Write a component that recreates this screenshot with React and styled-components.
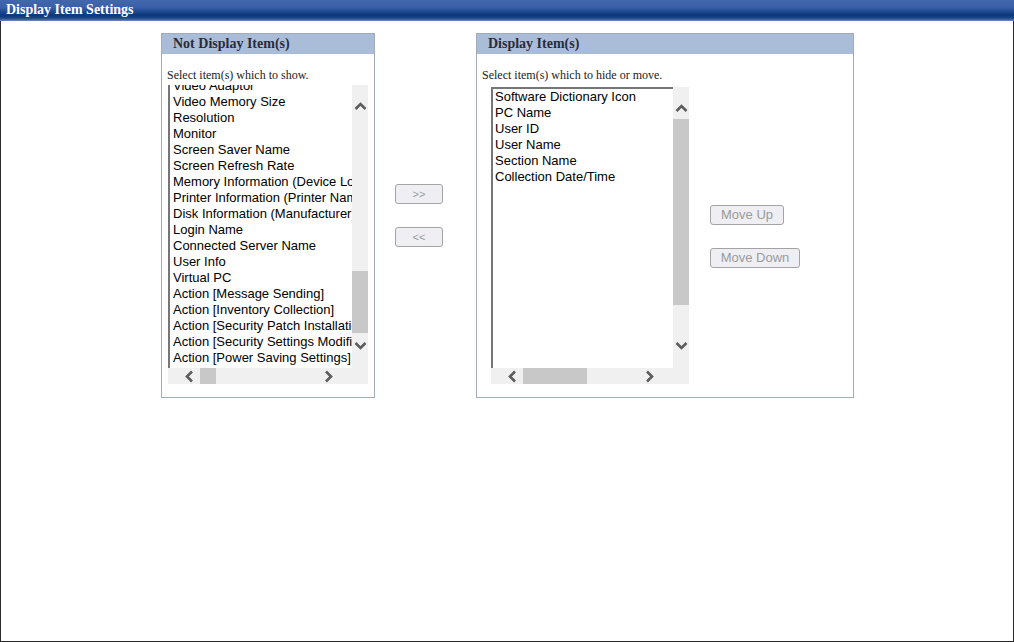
import React from "react";
import styled, { createGlobalStyle } from "styled-components";

const Global = createGlobalStyle`
  html, body { margin: 0; padding: 0; background: #fff; }
  body { width: 1014px; height: 642px; overflow: hidden; }
  * { box-sizing: border-box; }
`;

const Page = styled.div`
  width: 1014px;
  height: 642px;
  display: flex;
  flex-direction: column;
`;

const TitleBar = styled.div`
  height: 21px;
  flex: none;
  padding-left: 6px;
  color: #fff;
  font: bold 14px/20px "Liberation Serif", serif;
  background: linear-gradient(
    to bottom,
    #4267ad 0%,
    #3a60a8 35%,
    #1f4a92 55%,
    #0b3879 72%,
    #1a4485 85%,
    #4a6ca6 95%,
    #7a92bd 100%
  );
`;

const Frame = styled.div`
  flex: 1;
  border: 1px solid #2a2a2a;
  border-top: none;
  padding: 12px 0 0 160px;
`;

const Row = styled.div`
  display: flex;
  align-items: flex-start;
`;

const Panel = styled.section`
  width: ${(p) => p.$w}px;
  height: 365px;
  border: 1px solid #a2abba;
  display: flex;
  flex-direction: column;
`;

const PanelHeader = styled.h2`
  margin: 0;
  height: 20px;
  padding-left: 11px;
  background: #a9bdd8;
  color: #2b2b38;
  font: bold 14px/20px "Liberation Serif", serif;
`;

const Hint = styled.div`
  margin-top: 14px;
  padding-left: 5px;
  height: 14px;
  color: #222;
  font: 12px/14px "Liberation Serif", serif;
`;

const PanelBody = styled.div`
  display: flex;
  align-items: flex-start;
  margin-top: ${(p) => p.$top}px;
  padding-left: ${(p) => p.$left}px;
`;

const ListBox = styled.div`
  width: ${(p) => p.$w}px;
  height: ${(p) => p.$h}px;
  display: grid;
  grid-template-columns: 1fr 16px;
  grid-template-rows: 1fr 16px;
  background: #f0f0f0;
`;

const ListContent = styled.div`
  background: #fff;
  overflow: hidden;
  border-left: 2px solid #767676;
  border-top: ${(p) => (p.$topBorder ? "2px solid #767676" : "none")};
  padding-left: ${(p) => p.$pad}px;
`;

const ItemList = styled.ul`
  list-style: none;
  margin: ${(p) => p.$offset}px 0 0;
  padding: 0;
`;

const Item = styled.li`
  height: 16px;
  white-space: nowrap;
  color: #000;
  font: 13px/16px "Liberation Sans", Arial, sans-serif;
`;

const VBar = styled.div`
  display: flex;
  flex-direction: column;
  background: #f0f0f0;
`;

const HBar = styled.div`
  display: flex;
  background: #f0f0f0;
`;

const ArrowV = styled.div`
  height: 32px;
  flex: none;
  display: flex;
  justify-content: center;
  align-items: ${(p) => (p.$end ? "flex-start" : "flex-end")};
  padding: ${(p) => (p.$end ? "3px 0 0" : "0 0 4px")};
`;

const ArrowH = styled.div`
  width: 32px;
  flex: none;
  display: flex;
  align-items: center;
  justify-content: ${(p) => (p.$end ? "flex-start" : "flex-end")};
  padding: ${(p) => (p.$end ? "0 0 0 2px" : "0 4px 0 0")};
`;

const Track = styled.div`
  flex: 1;
  display: flex;
  flex-direction: ${(p) => (p.$vertical ? "column" : "row")};
`;

const Thumb = styled.div`
  flex: none;
  background: #c8c8c8;
`;

const Corner = styled.div`
  background: #f0f0f0;
`;

const MiddleCol = styled.div`
  width: 101px;
  padding: 151px 0 0 20px;
  display: flex;
  flex-direction: column;
  align-items: flex-start;
  gap: 23px;
`;

const SideCol = styled.div`
  margin-left: 21px;
  padding-top: 118px;
  display: flex;
  flex-direction: column;
  align-items: flex-start;
  gap: 23px;
`;

const Button = styled.button`
  width: ${(p) => p.$w}px;
  height: 20px;
  padding: 0;
  border: 1px solid #a3a3a3;
  border-radius: 3px;
  background: #efeff3;
  color: #9a9a9a;
  font: ${(p) => p.$fs || 13}px/18px "Liberation Sans", Arial, sans-serif;
  text-align: center;
`;

const Chevron = ({ dir }) => {
  const pts = {
    up: "1.5,9 6.5,4 11.5,9",
    down: "1.5,4 6.5,9 11.5,4",
    left: "9,1.5 4,6.5 9,11.5",
    right: "4,1.5 9,6.5 4,11.5",
  }[dir];
  return (
    <svg width="13" height="13" viewBox="0 0 13 13">
      <polyline points={pts} fill="none" stroke="#5c5c5c" strokeWidth="2.6" />
    </svg>
  );
};

function ScrollList({ w, h, items, offset, pad, topBorder, vThumb, hThumb }) {
  return (
    <ListBox $w={w} $h={h}>
      <ListContent $pad={pad} $topBorder={topBorder}>
        <ItemList $offset={offset}>
          {items.map((t) => (
            <Item key={t}>{t}</Item>
          ))}
        </ItemList>
      </ListContent>
      <VBar>
        <ArrowV>
          <Chevron dir="up" />
        </ArrowV>
        <Track $vertical>
          <Thumb style={{ marginTop: vThumb[0], height: vThumb[1], width: "100%" }} />
        </Track>
        <ArrowV $end>
          <Chevron dir="down" />
        </ArrowV>
      </VBar>
      <HBar>
        <ArrowH>
          <Chevron dir="left" />
        </ArrowH>
        <Track>
          <Thumb style={{ marginLeft: hThumb[0], width: hThumb[1], height: "100%" }} />
        </Track>
        <ArrowH $end>
          <Chevron dir="right" />
        </ArrowH>
      </HBar>
      <Corner />
    </ListBox>
  );
}

const hidden = [
  "Video Adaptor",
  "Video Memory Size",
  "Resolution",
  "Monitor",
  "Screen Saver Name",
  "Screen Refresh Rate",
  "Memory Information (Device Location)",
  "Printer Information (Printer Name)",
  "Disk Information (Manufacturer)",
  "Login Name",
  "Connected Server Name",
  "User Info",
  "Virtual PC",
  "Action [Message Sending]",
  "Action [Inventory Collection]",
  "Action [Security Patch Installation]",
  "Action [Security Settings Modification]",
  "Action [Power Saving Settings]",
];

const shown = [
  "Software Dictionary Icon",
  "PC Name",
  "User ID",
  "User Name",
  "Section Name",
  "Collection Date/Time",
];

export default function App() {
  return (
    <Page>
      <Global />
      <TitleBar>Display Item Settings</TitleBar>
      <Frame>
        <Row>
          <Panel $w={214}>
            <PanelHeader>Not Display Item(s)</PanelHeader>
            <Hint>Select item(s) which to show.</Hint>
            <PanelBody $top={3} $left={6}>
              <ScrollList
                w={200}
                h={299}
                items={hidden}
                offset={-7}
                pad={3}
                vThumb={[154, 62]}
                hThumb={[0, 16]}
              />
            </PanelBody>
          </Panel>
          <MiddleCol>
            <Button $w={48} $fs={11} disabled>&gt;&gt;</Button>
            <Button $w={48} $fs={11} disabled>&lt;&lt;</Button>
          </MiddleCol>
          <Panel $w={378}>
            <PanelHeader>Display Item(s)</PanelHeader>
            <Hint>Select item(s) which to hide or move.</Hint>
            <PanelBody $top={5} $left={14}>
              <ScrollList
                w={198}
                h={297}
                items={shown}
                offset={0}
                pad={2}
                topBorder
                vThumb={[0, 186]}
                hThumb={[0, 64]}
              />
              <SideCol>
                <Button $w={74} disabled>Move Up</Button>
                <Button $w={90} disabled>Move Down</Button>
              </SideCol>
            </PanelBody>
          </Panel>
        </Row>
      </Frame>
    </Page>
  );
}
